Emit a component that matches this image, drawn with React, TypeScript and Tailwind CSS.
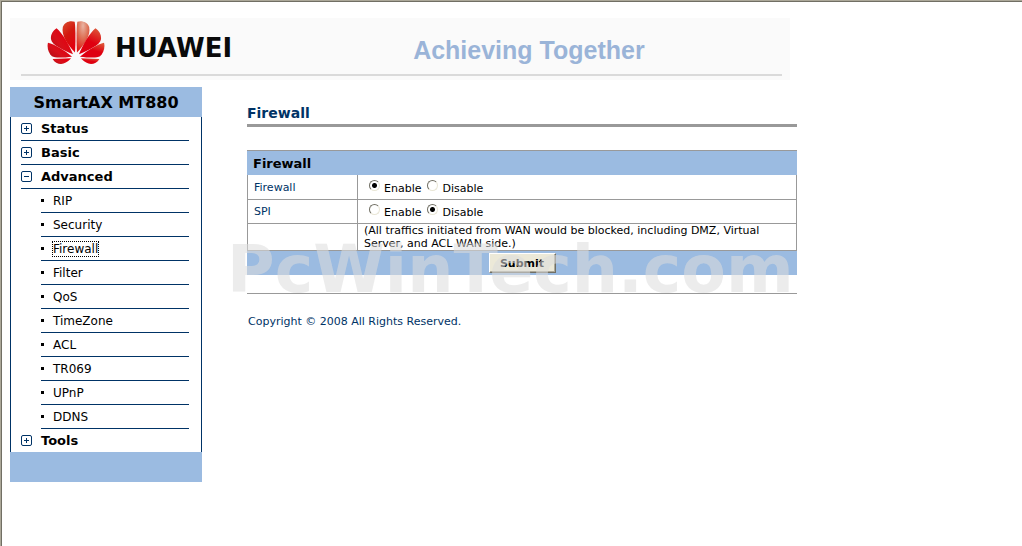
import React, { useState } from 'react';

interface MenuSection {
  title: string;
  items?: string[];
}

const MENU: MenuSection[] = [
  { title: 'Status' },
  { title: 'Basic' },
  {
    title: 'Advanced',
    items: [
      'RIP',
      'Security',
      'Firewall',
      'Filter',
      'QoS',
      'TimeZone',
      'ACL',
      'TR069',
      'UPnP',
      'DDNS',
    ],
  },
  { title: 'Tools' },
];

const Petals: React.FC<{ top: string; side: string }> = ({ top, side }) => (
  <>
    <path
      d="M85 97C87 65 87 25 84 4C70 -1 53 5 48 20C43 45 62 74 85 97Z"
      fill={top}
    />
    <path
      d="M79 103C68 75 46 38 29 24C18 32 11 42 12 56C14 76 50 88 79 103Z"
      fill={side}
    />
    <path
      d="M76 110C52 90 22 72 3 68C-1 82 5 100 15 109C24 115 52 113 76 110Z"
      fill={side}
    />
    <path
      d="M73 115L17 117C24 130 40 135 50 131C60 127 68 122 73 115Z"
      fill={side}
    />
  </>
);

const Logo: React.FC = () => (
  <svg
    className="w-[58px] h-[45px] shrink-0"
    viewBox="0 0 176 134"
    aria-hidden="true"
  >
    <defs>
      <linearGradient id="top-left" x1="0" y1="0" x2="0.4" y2="1">
        <stop offset="0" stopColor="#d9502f" />
        <stop offset="0.5" stopColor="#d3180f" />
        <stop offset="1" stopColor="#e2000f" />
      </linearGradient>
      <radialGradient id="top-right" cx="0.5" cy="0.15" r="0.85">
        <stop offset="0" stopColor="#e9b4a4" />
        <stop offset="0.45" stopColor="#de7459" />
        <stop offset="1" stopColor="#df1a14" />
      </radialGradient>
      <linearGradient id="left" x1="0" y1="0.9" x2="0.8" y2="0.3">
        <stop offset="0" stopColor="#b30d14" />
        <stop offset="0.5" stopColor="#d8101a" />
        <stop offset="1" stopColor="#e2000f" />
      </linearGradient>
      <linearGradient id="right" x1="0.3" y1="0" x2="0.5" y2="0.5">
        <stop offset="0" stopColor="#dd5236" />
        <stop offset="1" stopColor="#df0010" />
      </linearGradient>
    </defs>
    <Petals top="url(#top-left)" side="url(#left)" />
    <g transform="translate(176 0) scale(-1 1)">
      <Petals top="url(#top-right)" side="url(#right)" />
    </g>
  </svg>
);

const ToggleIcon: React.FC<{ open: boolean }> = ({ open }) => (
  <svg
    className="w-[11px] h-[11px] shrink-0"
    viewBox="0 0 11 11"
    fill="none"
    stroke="#003366"
    aria-hidden="true"
  >
    <rect x="0.5" y="0.5" width="10" height="10" rx="1.5" />
    <path d={open ? 'M3 5.5H8' : 'M3 5.5H8M5.5 3V8'} />
  </svg>
);

const Sidebar: React.FC = () => (
  <nav className="w-48 shrink-0">
    <div className="h-[30px] bg-[#9bbbe1] text-center text-[16px] leading-8 font-bold">
      SmartAX MT880
    </div>
    <ul className="border-x border-[#003366] pl-[10px] pr-3 text-[13px] leading-[23px]">
      {MENU.map(({ title, items }, index) => (
        <li key={title}>
          <a
            href="#"
            className={
              index < MENU.length - 1
                ? 'flex items-center gap-[9px] font-bold border-b border-[#003366]'
                : 'flex items-center gap-[9px] font-bold'
            }
          >
            <ToggleIcon open={!!items} />
            {title}
          </a>
          {items && (
            <ul className="pl-5 text-[12px]">
              {items.map((item) => (
                <li
                  key={item}
                  className="flex items-center gap-[9px] h-6 border-b border-[#003366]"
                >
                  <span className="w-[3px] h-[3px] bg-black" />
                  <a
                    href="#"
                    className={
                      item === 'Firewall'
                        ? 'leading-[14px] outline-1 outline-dotted outline-black'
                        : 'leading-[14px]'
                    }
                  >
                    {item}
                  </a>
                </li>
              ))}
            </ul>
          )}
        </li>
      ))}
    </ul>
    <div className="h-[30px] bg-[#9bbbe1]" />
  </nav>
);

interface ToggleFieldProps {
  name: string;
  enabled: boolean;
  onChange: (enabled: boolean) => void;
}

const ToggleField: React.FC<ToggleFieldProps> = ({
  name,
  enabled,
  onChange,
}) => (
  <div className="flex gap-[6px] pl-[5px]">
    {[true, false].map((value) => (
      <label key={String(value)} className="flex gap-1">
        <input
          type="radio"
          name={name}
          checked={enabled === value}
          onChange={() => onChange(value)}
          className="appearance-none w-[11px] h-[11px] rounded-full border border-t-[#716f64] border-l-[#716f64] border-r-[#e9e6d6] border-b-[#e9e6d6] bg-white bg-origin-border checked:bg-[radial-gradient(circle,#000_2px,transparent_3px)]"
        />
        <span className="pt-[2px]">{value ? 'Enable' : 'Disable'}</span>
      </label>
    ))}
  </div>
);

export default function App() {
  const [firewall, setFirewall] = useState(true);
  const [spi, setSpi] = useState(false);

  return (
    <div className="min-h-screen border-t border-l border-[#aca899] bg-white text-black font-['DejaVu_Sans',Verdana,sans-serif]">
      <div className="min-h-[calc(100vh-1px)] border-t border-l border-[#716f64] pt-4 pl-2 pr-2">
        <header className="max-w-[780px] h-[62px] bg-[#fafafa] pl-[11px] pr-2">
          <div className="flex items-start h-[58px] pl-[26px] pt-[2px] border-b-2 border-[#dadada]">
            <Logo />
            <span className="pl-[10px] pt-3 text-[26px] leading-8 font-bold text-[#0a0a0a]">
              HUAWEI
            </span>
            <span className="ml-[181px] pt-4 text-[25px] leading-7 font-bold text-[#9ab4d8] font-['Liberation_Sans',Arial,sans-serif] whitespace-nowrap">
              Achieving Together
            </span>
          </div>
        </header>

        <div className="flex items-start gap-[45px] pt-[7px]">
          <Sidebar />

          <main className="flex-1 max-w-[550px] pt-4 text-[11px] leading-[13px]">
            <h1 className="h-6 border-b-3 border-[#999999] text-[14px] leading-5 font-bold text-[#003366]">
              Firewall
            </h1>

            <form
              className="relative mt-[23px]"
              onSubmit={(e) => e.preventDefault()}
            >
              <table className="w-full table-fixed border-separate border-spacing-0">
                <colgroup>
                  <col className="w-[110px]" />
                  <col />
                </colgroup>
                <thead>
                  <tr>
                    <th
                      colSpan={2}
                      className="h-[25px] p-0 pl-[6px] border-t border-[#999999] bg-[#9bbbe1] text-left text-[13px]"
                    >
                      Firewall
                    </th>
                  </tr>
                </thead>
                <tbody>
                  <tr>
                    <td className="h-[25px] p-0 pl-[6px] border-b border-l border-[#999999] text-[#003366]">
                      Firewall
                    </td>
                    <td className="p-0 pl-[6px] border-x border-b border-[#999999]">
                      <ToggleField
                        name="firewall"
                        enabled={firewall}
                        onChange={setFirewall}
                      />
                    </td>
                  </tr>
                  <tr>
                    <td className="h-6 p-0 pl-[6px] border-b border-l border-[#999999] text-[#003366]">
                      SPI
                    </td>
                    <td className="p-0 pl-[6px] border-x border-b border-[#999999]">
                      <ToggleField
                        name="spi"
                        enabled={spi}
                        onChange={setSpi}
                      />
                    </td>
                  </tr>
                  <tr>
                    <td className="p-0 border-b border-l border-[#999999]" />
                    <td className="h-[27px] p-0 pl-[6px] border-x border-b border-[#999999]">
                      (All traffics initiated from WAN would be blocked,
                      including DMZ, Virtual Server, and ACL WAN side.)
                    </td>
                  </tr>
                </tbody>
              </table>
              <div className="flex items-center justify-center h-6 bg-[#9bbbe1]">
                <button
                  type="submit"
                  className="w-[67px] h-5 border border-t-white border-l-white border-r-[#716f64] border-b-[#716f64] bg-[#ece9d8] shadow-[inset_-1px_-1px_#aca899] font-bold"
                >
                  Submit
                </button>
              </div>
              <span className="absolute -left-5 top-[88px] text-[65px] leading-[64px] font-bold text-[#dddddd]/55 pointer-events-none select-none whitespace-nowrap">
                PcWinTech.com
              </span>
            </form>

            <hr className="mt-[18px] border-[#999999]" />
            <p className="pt-[21px] pl-px text-[#003366]">
              Copyright © 2008 All Rights Reserved.
            </p>
          </main>
        </div>
      </div>
    </div>
  );
}
